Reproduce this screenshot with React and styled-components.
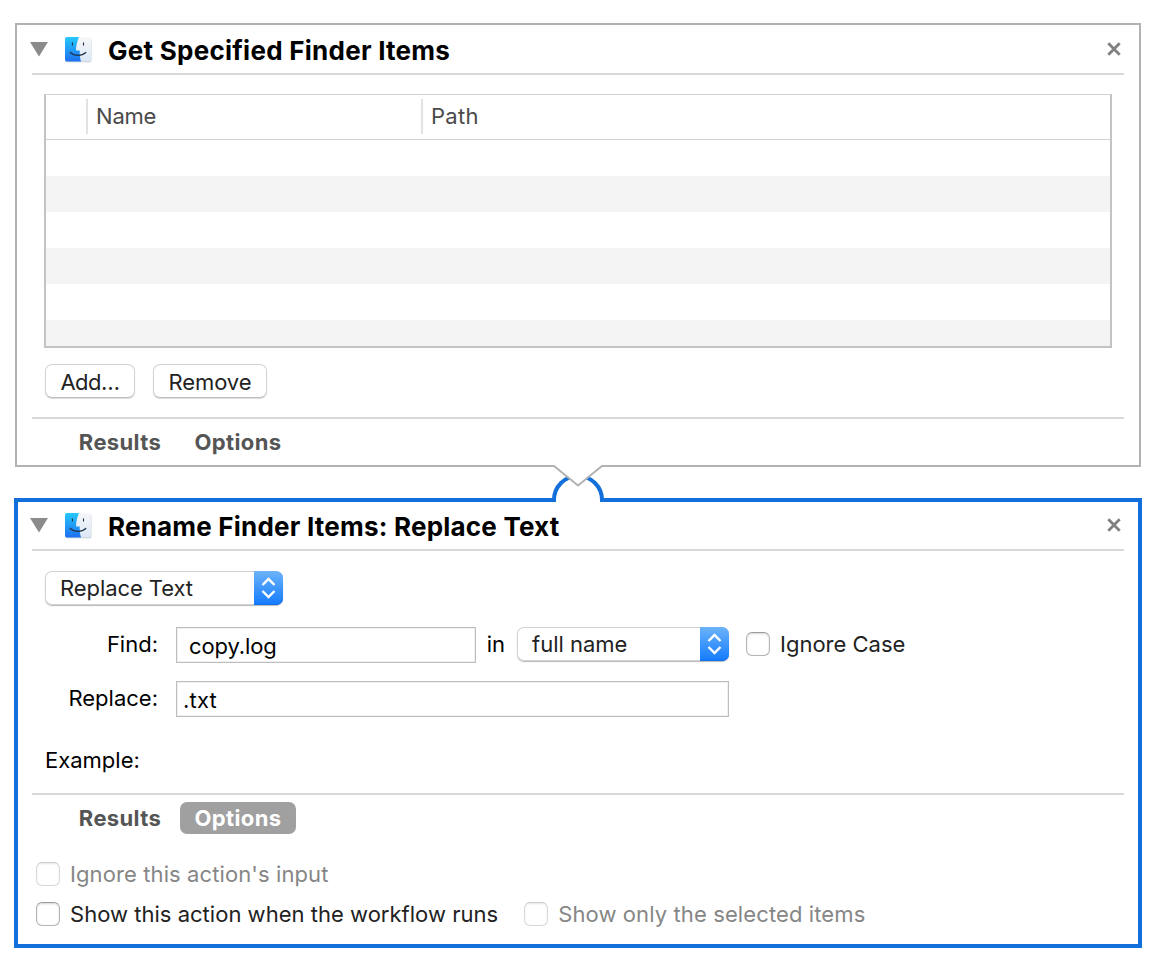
import React from "react";
import styled, { createGlobalStyle, css } from "styled-components";

const GlobalStyle = createGlobalStyle`
  * { box-sizing: border-box; }
  html, body { margin: 0; background: #fff; }
  body {
    font-family: Inter, "Liberation Sans", sans-serif;
    font-size: 22px;
    line-height: 28px;
    color: #000;
  }
`;

const Page = styled.main`
  position: relative;
  display: flex;
  flex-direction: column;
  gap: 31px;
  height: 970px;
  padding: 23px 14px 0;
  overflow: hidden;
`;

const Card = styled.section`
  display: flex;
  flex-direction: column;
  background: #fff;
  ${(p) =>
    p.$selected
      ? css`
          height: 450px;
          border: 4px solid #136fd9;
          padding: 0 14px;
        `
      : css`
          height: 444px;
          margin: 0 1px;
          border: 2px solid #b2b2b2;
          padding: 0 15px;
        `}
`;

const Header = styled.header`
  display: flex;
  align-items: center;
  flex: none;
  height: ${(p) => (p.$selected ? 49 : 50)}px;
  padding-bottom: ${(p) => (p.$selected ? 1 : 0)}px;
  border-bottom: 2px solid #d8d8d8;
  svg { flex: none; }
`;

const Title = styled.h1`
  flex: 1;
  margin: 3px 0 0 15px;
  font-size: 26px;
  line-height: 32px;
  font-weight: 700;
  letter-spacing: ${(p) => p.$track}px;
  white-space: nowrap;
`;

const Text = styled.span`
  color: ${(p) => p.$color || "#222"};
  font-weight: ${(p) => p.$weight || 400};
  letter-spacing: ${(p) => p.$track || 0}px;
  white-space: nowrap;
`;

const CloseButton = styled.button`
  display: flex;
  width: 14px;
  height: 14px;
  margin: 0 3px 0 0;
  padding: 0;
  border: 0;
  background: none;
`;

const Table = styled.div`
  flex: none;
  height: 254px;
  margin: 19px 12px 0;
  border: 2px solid #c3c3c3;
  border-top: 1px solid #d2d2d2;
`;

const TableHead = styled.div`
  display: grid;
  grid-template-columns: 40px 335px 1fr;
  height: 45px;
  padding: 4px 0 5px;
  border-bottom: 1px solid #d2d2d2;
`;

const HeadCell = styled.div`
  display: flex;
  align-items: center;
  padding: 0 0 1px 8px;
  border-left: ${(p) => (p.$first ? "0" : "2px solid #e2e2e2")};
`;

const TableRow = styled.div`
  height: ${(p) => p.$height || 36}px;
  background: ${(p) => (p.$striped ? "#f4f4f4" : "#fff")};
`;

const ButtonRow = styled.div`
  display: flex;
  gap: 18px;
  height: 69px;
  padding: 16px 13px 0;
`;

const PushButton = styled.button`
  width: ${(p) => p.$width}px;
  height: 34px;
  padding: 2px 0 0;
  border: 1px solid #d2d2d2;
  border-bottom-color: #bcbcbc;
  border-radius: 7px;
  background: #fff;
  box-shadow: 0 1px 1px rgba(0, 0, 0, 0.14);
  font: inherit;
`;

const Footer = styled.footer`
  display: flex;
  gap: 4px;
  flex: none;
  padding: 7px 0 0 32px;
  border-top: 2px solid #d8d8d8;
`;

const Tab = styled.button`
  width: ${(p) => p.$width}px;
  height: 32px;
  padding: 0;
  border: 0;
  border-radius: 7px;
  background: ${(p) => (p.$active ? "#a0a0a0" : "none")};
  font: inherit;
`;

const Form = styled.div`
  display: flex;
  flex-direction: column;
  height: 242px;
  padding: 20px 13px 0;
`;

const FormRow = styled.div`
  display: flex;
  align-items: flex-start;
  height: ${(p) => p.$height}px;
`;

const Label = styled.label`
  width: ${(p) => (p.$width ? `${p.$width}px` : "auto")};
  margin-right: ${(p) => p.$gap || 0}px;
  padding-top: 3px;
  text-align: right;
`;

const PopUp = styled.button`
  display: flex;
  width: ${(p) => p.$width}px;
  height: 34px;
  padding: 0;
  border: 0;
  border-radius: 7px;
  background: #fff;
  box-shadow: inset 0 0 0 1px #d2d2d2, 0 1px 1px rgba(0, 0, 0, 0.28);
  font: inherit;
  text-align: left;
`;

const PopUpText = styled.span`
  flex: 1;
  padding: 3px 0 0 15px;
`;

const PopUpCap = styled.span`
  display: flex;
  align-items: center;
  justify-content: center;
  width: 29px;
  height: 34px;
  border-radius: 0 7px 7px 0;
  background: linear-gradient(#6cb3fa, #3f97fb 50%, #147bfe);
  box-shadow: inset 0 -1px 0 #0f6ff0;
`;

const Field = styled.div`
  width: ${(p) => p.$width}px;
  height: 36px;
  padding: 4px 0 0 ${(p) => p.$indent}px;
  border: 1px solid #bdbdbd;
  box-shadow: inset 0 0 0 1px #f0f0f0;
`;

const Check = styled.label`
  display: flex;
  gap: 10px;
  align-items: center;
  height: 24px;
  margin: ${(p) => p.$margin || 0};
`;

const Box = styled.span`
  width: 24px;
  height: 24px;
  border: 1px solid ${(p) => (p.$disabled ? "#d8d8d8" : "#b4b4b4")};
  border-top-color: ${(p) => (p.$disabled ? "#cdcdcd" : "#9c9c9c")};
  border-radius: 6px;
  background: #fff;
  box-shadow: inset 0 1px 2px rgba(0, 0, 0, ${(p) => (p.$disabled ? 0.1 : 0.16)});
`;

const Options = styled.div`
  display: flex;
  flex-direction: column;
  gap: 16px;
  padding: 28px 0 0 4px;
`;

const CheckRow = styled.div`
  display: flex;
`;

const Connector = styled.svg`
  position: absolute;
  left: 548px;
  top: 463px;
`;

const Triangle = styled.svg`
  margin: 0 15px 0 -2px;
`;

const Finder = styled.svg`
  margin-top: 2px;
`;

function FinderIcon({ id }) {
  return (
    <Finder width="30" height="30" viewBox="0 0 30 30">
      <defs>
        <linearGradient id={`${id}-blue`} x1="0" y1="0" x2="0" y2="1">
          <stop offset="0" stopColor="#25c9fb" />
          <stop offset="1" stopColor="#1d6ff0" />
        </linearGradient>
        <linearGradient id={`${id}-pale`} x1="0" y1="0" x2="0" y2="1">
          <stop offset="0" stopColor="#f6f7f8" />
          <stop offset="1" stopColor="#dbe8f6" />
        </linearGradient>
      </defs>
      <rect x="2" y="2.800" width="26.400" height="24.400" rx="2" fill="#c4c8cc" />
      <rect x="2" y="2" width="26.200" height="24.500" rx="2" fill={`url(#${id}-pale)`} />
      <path
        d="M4 2H16C14 6.500 13.100 11 13 15.600H16.700C16.600 19.800 17 23.300 18 26.500H4a2 2 0 0 1-2-2V4a2 2 0 0 1 2-2Z"
        fill={`url(#${id}-blue)`}
      />
      <path d="M9.400 7.700v2.400M20.500 7.700v2.400" stroke="#20364c" strokeWidth="1.100" strokeLinecap="round" />
      <path d="M7.200 17.500C11.200 21.300 18.800 21.300 22.800 17.500" fill="none" stroke="#20364c" strokeWidth="1.200" strokeLinecap="round" />
    </Finder>
  );
}

function CardHeader({ id, selected, title, track }) {
  return (
    <Header $selected={selected}>
      <Triangle width="18" height="16" viewBox="0 0 18 16">
        <path d="M0 1H18L9 15.600Z" fill="#8b8b8b" />
      </Triangle>
      <FinderIcon id={id} />
      <Title $track={track}>{title}</Title>
      <CloseButton aria-label="Close">
        <svg width="14" height="14" viewBox="0 0 14 14">
          <path d="M1.300 1.300 12.700 12.700M12.700 1.300 1.300 12.700" stroke="#808080" strokeWidth="2.800" />
        </svg>
      </CloseButton>
    </Header>
  );
}

function Select({ width, track, children }) {
  return (
    <PopUp $width={width}>
      <PopUpText>
        <Text $track={track}>{children}</Text>
      </PopUpText>
      <PopUpCap>
        <svg width="15" height="22" viewBox="0 0 15 22">
          <path d="M1.500 8 7.500 2 13.500 8M1.500 14 7.500 20 13.500 14" fill="none" stroke="#fff" strokeWidth="2.400" />
        </svg>
      </PopUpCap>
    </PopUp>
  );
}

function CheckBox({ disabled, track, margin, children }) {
  return (
    <Check $margin={margin}>
      <Box $disabled={disabled} />
      <Text $color={disabled ? "#868686" : "#222"} $track={track}>{children}</Text>
    </Check>
  );
}

function Tabs({ active }) {
  return (
    <Footer>
      <Tab $width={112}>
        <Text $weight={700} $color="#555" $track={0.35}>Results</Text>
      </Tab>
      <Tab $width={116} $active={active}>
        <Text $weight={700} $color={active ? "#fff" : "#555"} $track={0.4}>Options</Text>
      </Tab>
    </Footer>
  );
}

export default function App() {
  return (
    <>
      <GlobalStyle />
      <Page>
        <Card>
          <CardHeader id="get" title="Get Specified Finder Items" track={0.26} />
          <Table>
            <TableHead>
              <HeadCell $first />
              <HeadCell><Text $color="#4a4a4a" $track={-0.2}>Name</Text></HeadCell>
              <HeadCell><Text $color="#4a4a4a" $track={0.3}>Path</Text></HeadCell>
            </TableHead>
            <TableRow />
            <TableRow $striped />
            <TableRow />
            <TableRow $striped />
            <TableRow />
            <TableRow $striped $height={26} />
          </Table>
          <ButtonRow>
            <PushButton $width={90}><Text $track={-0.5}>Add…</Text></PushButton>
            <PushButton $width={114}><Text $track={-0.1}>Remove</Text></PushButton>
          </ButtonRow>
          <Tabs />
        </Card>
        <Card $selected>
          <CardHeader id="rename" selected title="Rename Finder Items: Replace Text" track={0.21} />
          <Form>
            <FormRow $height={56}>
              <Select width={238} track={-0.08}>Replace Text</Select>
            </FormRow>
            <FormRow $height={54}>
              <Label $width={113} $gap={18}><Text $color="#000">Find:</Text></Label>
              <Field $width={300} $indent={12}><Text $color="#000" $track={-0.1}>copy.log</Text></Field>
              <Label $width={29} $gap={12}><Text $color="#000">in</Text></Label>
              <Select width={212}>full name</Select>
              <CheckBox margin="5px 0 0 17px">Ignore Case</CheckBox>
            </FormRow>
            <FormRow $height={62}>
              <Label $width={113} $gap={18}><Text $color="#000">Replace:</Text></Label>
              <Field $width={553} $indent={6}><Text $color="#000" $track={0.2}>.txt</Text></Field>
            </FormRow>
            <FormRow $height={34}>
              <Label><Text $color="#000">Example:</Text></Label>
            </FormRow>
          </Form>
          <Tabs active />
          <Options>
            <CheckRow>
              <CheckBox disabled track={0.1}>Ignore this action's input</CheckBox>
            </CheckRow>
            <CheckRow>
              <CheckBox track={0.02}>Show this action when the workflow runs</CheckBox>
              <CheckBox disabled track={0.11} margin="0 0 0 26px">Show only the selected items</CheckBox>
            </CheckRow>
          </Options>
        </Card>
        <Connector width="60" height="41" viewBox="0 0 60 41">
          <path d="M8 35H52V41H8Z" fill="#fff" />
          <path d="M6 39V37A24 24 0 0 1 54 37V39" fill="#fff" stroke="#136fd9" strokeWidth="4" />
          <path d="M6 0V3L30 22.500L54 3V0Z" fill="#fff" />
          <path d="M5 3H6L30 22.500L54 3H55" fill="none" stroke="#b2b2b2" strokeWidth="2" />
        </Connector>
      </Page>
    </>
  );
}
